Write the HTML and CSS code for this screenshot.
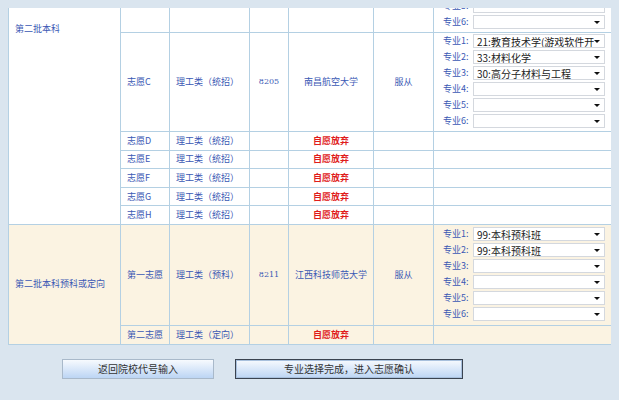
FILE: index.html
```html
<!DOCTYPE html>
<html lang="zh-CN">
<head>
  <meta charset="UTF-8">
  <title>专业选择</title>
  <link rel="stylesheet" href="styles.css">
</head>
<body>
<table class="wish">
  <colgroup>
    <col class="c-batch">
    <col class="c-wish">
    <col class="c-type">
    <col class="c-code">
    <col class="c-school">
    <col class="c-obey">
    <col class="c-major">
  </colgroup>

  <!-- 第二批本科 -->
  <tr>
    <td class="batch" rowspan="8">第二批本科</td>
    <td>志愿A</td>
    <td>理工类（统招）</td>
    <td class="mid code">8101</td>
    <td class="mid">南昌大学</td>
    <td class="mid">服从</td>
    <td class="majors">
      <div class="pick"><span class="lbl">专业1:</span><span class="sel">01:计算机科学与技术<i></i></span></div>
      <div class="pick"><span class="lbl">专业2:</span><span class="sel"><i></i></span></div>
      <div class="pick"><span class="lbl">专业3:</span><span class="sel"><i></i></span></div>
      <div class="pick"><span class="lbl">专业4:</span><span class="sel"><i></i></span></div>
      <div class="pick"><span class="lbl">专业5:</span><span class="sel"><i></i></span></div>
      <div class="pick"><span class="lbl">专业6:</span><span class="sel"><i></i></span></div>
    </td>
  </tr>
  <tr>
    <td>志愿B</td>
    <td>理工类（统招）</td>
    <td class="mid code">8102</td>
    <td class="mid">华东交通大学</td>
    <td class="mid">服从</td>
    <td class="majors">
      <div class="pick"><span class="lbl">专业1:</span><span class="sel"><i></i></span></div>
      <div class="pick"><span class="lbl">专业2:</span><span class="sel"><i></i></span></div>
      <div class="pick"><span class="lbl">专业3:</span><span class="sel"><i></i></span></div>
      <div class="pick"><span class="lbl">专业4:</span><span class="sel"><i></i></span></div>
      <div class="pick"><span class="lbl">专业5:</span><span class="sel"><i></i></span></div>
      <div class="pick"><span class="lbl">专业6:</span><span class="sel"><i></i></span></div>
    </td>
  </tr>
  <tr>
    <td>志愿C</td>
    <td>理工类（统招）</td>
    <td class="mid code">8205</td>
    <td class="mid">南昌航空大学</td>
    <td class="mid">服从</td>
    <td class="majors">
      <div class="pick"><span class="lbl">专业1:</span><span class="sel">21:教育技术学(游戏软件开<i></i></span></div>
      <div class="pick"><span class="lbl">专业2:</span><span class="sel">33:材料化学<i></i></span></div>
      <div class="pick"><span class="lbl">专业3:</span><span class="sel">30:高分子材料与工程<i></i></span></div>
      <div class="pick"><span class="lbl">专业4:</span><span class="sel"><i></i></span></div>
      <div class="pick"><span class="lbl">专业5:</span><span class="sel"><i></i></span></div>
      <div class="pick"><span class="lbl">专业6:</span><span class="sel"><i></i></span></div>
    </td>
  </tr>
  <tr class="slim">
    <td>志愿D</td><td>理工类（统招）</td><td></td><td class="mid quit">自愿放弃</td><td></td><td></td>
  </tr>
  <tr class="slim">
    <td>志愿E</td><td>理工类（统招）</td><td></td><td class="mid quit">自愿放弃</td><td></td><td></td>
  </tr>
  <tr class="slim">
    <td>志愿F</td><td>理工类（统招）</td><td></td><td class="mid quit">自愿放弃</td><td></td><td></td>
  </tr>
  <tr class="slim">
    <td>志愿G</td><td>理工类（统招）</td><td></td><td class="mid quit">自愿放弃</td><td></td><td></td>
  </tr>
  <tr class="slim">
    <td>志愿H</td><td>理工类（统招）</td><td></td><td class="mid quit">自愿放弃</td><td></td><td></td>
  </tr>

  <!-- 第二批本科预科或定向 -->
  <tr class="prep first">
    <td class="batch" rowspan="2">第二批本科预科或定向</td>
    <td>第一志愿</td>
    <td>理工类（预科）</td>
    <td class="mid code">8211</td>
    <td class="mid">江西科技师范大学</td>
    <td class="mid">服从</td>
    <td class="majors">
      <div class="pick"><span class="lbl">专业1:</span><span class="sel">99:本科预科班<i></i></span></div>
      <div class="pick"><span class="lbl">专业2:</span><span class="sel">99:本科预科班<i></i></span></div>
      <div class="pick"><span class="lbl">专业3:</span><span class="sel"><i></i></span></div>
      <div class="pick"><span class="lbl">专业4:</span><span class="sel"><i></i></span></div>
      <div class="pick"><span class="lbl">专业5:</span><span class="sel"><i></i></span></div>
      <div class="pick"><span class="lbl">专业6:</span><span class="sel"><i></i></span></div>
    </td>
  </tr>
  <tr class="prep slim">
    <td>第二志愿</td><td>理工类（定向）</td><td></td><td class="mid quit">自愿放弃</td><td></td><td></td>
  </tr>
</table>

<div class="actions">
  <button class="btn back">返回院校代号输入</button>
  <button class="btn main">专业选择完成，进入志愿确认</button>
</div>
</body>
</html>
```

FILE: styles.css
```css
body {
    margin: 8px;
    background-color: #dae5ef;
    font-family: "Noto Sans CJK SC", "DejaVu Sans", sans-serif;
    font-size: 9px;
    color: #3a58b4;
}

.wish {
    width: 605px;
    margin-top: -174px;
    border-collapse: collapse;
    table-layout: fixed;
    background-color: #fff;
    border: 1px solid #a5b8c9;
}

.c-batch { width: 112px; }
.c-wish { width: 49px; }
.c-type { width: 80px; }
.c-code { width: 39px; }
.c-school { width: 85px; }
.c-obey { width: 60px; }

.wish td {
    border: 1px solid #b4d0e3;
    padding: 0 6px;
    line-height: 12px;
    vertical-align: middle;
    white-space: nowrap;
    overflow: hidden;
}

.slim td {
    height: 17.6px;
}

.mid {
    text-align: center;
}

.code {
    font-family: "DejaVu Serif", serif;
    font-size: 8px;
}

.quit {
    color: #e01c1c;
    font-weight: bold;
}

.prep td {
    background-color: #fbf3e2;
}

.first td {
    border-top-color: #a9b6c2;
}

.wish td.majors {
    padding: 1px 7px 1px 9px;
}

.wish .first td.majors {
    padding: 2px 7px 2px 9px;
}

.pick {
    display: flex;
    align-items: flex-start;
    height: 16px;
}

.lbl {
    width: 30px;
    flex: none;
    line-height: 14px;
}

.sel {
    position: relative;
    flex: 1;
    height: 14px;
    line-height: 13px;
    box-sizing: border-box;
    border: 1px solid #d4d8de;
    background-color: #fff;
    color: #222;
    font-size: 10px;
    padding-left: 3px;
    overflow: hidden;
}

.sel i {
    position: absolute;
    right: 4px;
    top: 5px;
    border-left: 3px solid transparent;
    border-right: 3px solid transparent;
    border-top: 3px solid #111;
}

.actions {
    display: flex;
    gap: 21px;
    padding: 14px 0 0 54px;
}

.btn {
    height: 20px;
    padding: 0;
    font-family: "Noto Sans CJK SC", sans-serif;
    font-size: 10px;
    color: #333;
    border: 1px solid #a9b9ca;
    background: linear-gradient(#f7fafe, #bcd5f4);
    cursor: pointer;
}

.back {
    width: 152px;
}

.main {
    width: 228px;
    border: 1px solid #3a4350;
    box-shadow: inset 0 0 0 1px #a8c0dd;
}
```
